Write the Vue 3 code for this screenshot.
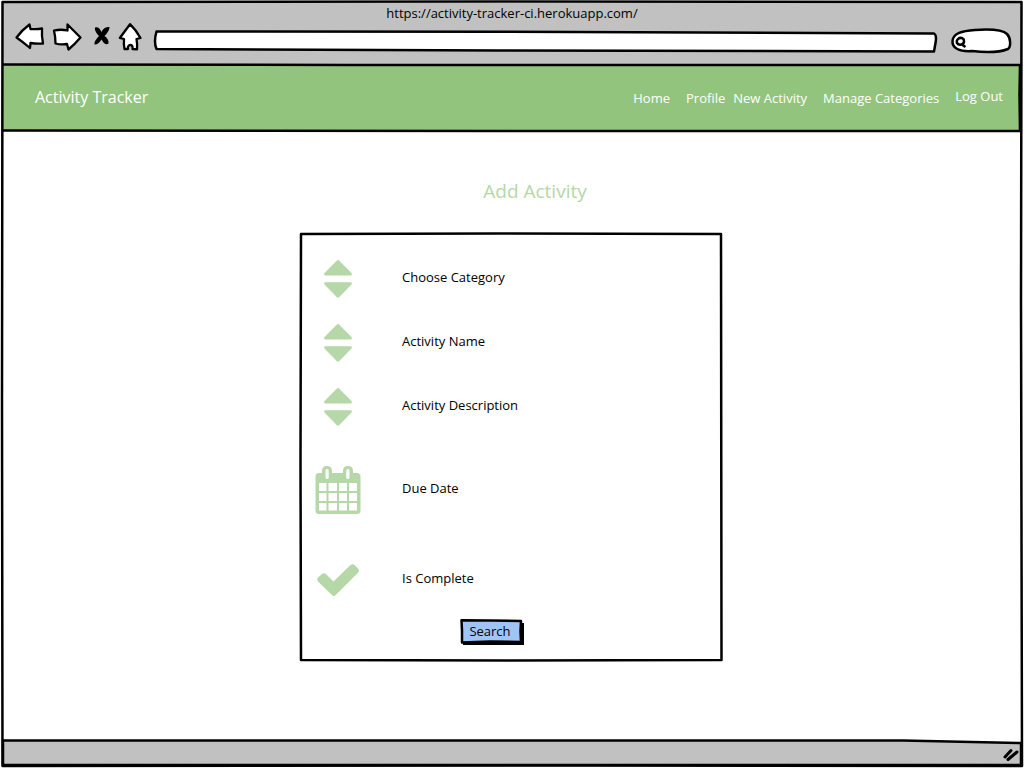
<script setup>
import { ref } from 'vue'

const address = ref('')
const query = ref('')

const links = [
  { id: 'home', label: 'Home' },
  { id: 'profile', label: 'Profile' },
  { id: 'new', label: 'New Activity' },
  { id: 'manage', label: 'Manage Categories' },
  { id: 'logout', label: 'Log Out' }
]

const fields = [
  { id: 'category', label: 'Choose Category', icon: 'sort' },
  { id: 'name', label: 'Activity Name', icon: 'sort' },
  { id: 'description', label: 'Activity Description', icon: 'sort' },
  { id: 'due', label: 'Due Date', icon: 'calendar' },
  { id: 'complete', label: 'Is Complete', icon: 'check' }
]
</script>

<template>
  <div class="window">
    <svg class="ink outline" viewBox="0 0 1024 768" preserveAspectRatio="none" aria-hidden="true">
      <path d="M2.5 2L500 1.5L1021.5 2L1021 300L1022 766L600 765.5L2.5 766L2 400Z" />
    </svg>

    <header class="toolbar">
      <p class="url">https://activity-tracker-ci.herokuapp.com/</p>
      <div class="controls">
        <button type="button" aria-label="Back" class="tool wide">
          <svg viewBox="15 22 28 36"><path d="M16.5 37.5Q22 30 29.5 24.5L30.5 29Q37 29.5 42 28.5Q41.5 36 43 43.5Q36 44 30.5 43L30 48Q23 42 16.5 37.5Z" /></svg>
        </button>
        <button type="button" aria-label="Forward" class="tool wide">
          <svg viewBox="53 22 28 36"><path d="M54 30.5Q61 29 67.5 30.5L67.5 24.5Q74 31 80.5 37.5Q75 44 68.5 49.5L67 44Q61 45 55.5 43.5Q55.5 37 54 30.5Z" /></svg>
        </button>
        <button type="button" aria-label="Stop" class="tool narrow">
          <svg viewBox="91 22 18 36"><path class="solid" d="M95 27.5Q99 26 101.500 32Q104 26.500 109.500 27Q109.500 31 104.500 36Q109 39 108.500 43.500Q105 46 101.500 39.500Q98 45 94.500 44.500Q94 41 99 36Q94 31 95 27.500Z" /></svg>
        </button>
        <button type="button" aria-label="Home page" class="tool medium">
          <svg viewBox="119 22 24 36"><path d="M130 24.200Q125 31 119.800 38L124 39Q123.500 44 124.500 49L128 49Q127.500 45 130.500 45Q133 45 132.500 49L137 49.300Q137.500 44 136.500 39L140.500 38Q136 30 130 24.200Z" /></svg>
        </button>
        <div class="address">
          <svg class="ink" viewBox="153 22 788 36" preserveAspectRatio="none" aria-hidden="true"><path d="M156.500 31.500L500 31.800L934 33.500Q937 35 935.500 43L934 51.500L500 50.500L156.500 49Q153.500 42 156.500 31.500Z" /></svg>
          <input v-model="address" type="text" aria-label="Address">
        </div>
        <div class="lookup">
          <svg class="ink" viewBox="951 22 62 36" preserveAspectRatio="none" aria-hidden="true"><path d="M952.500 41C953 33 962 31 975 30C990 29 1003 30 1007 34C1011 38 1011 47 1008 49C998 53 984 52.500 972 51C959 52 952 48 952.500 41Z" /><path class="glass" d="M963 38.500C959 36.500 956 40 957 43C959 46 964 44.500 964 41.500C964 40 963.500 39 963 38.500M962 44Q963 45.500 965.500 47" /></svg>
          <input v-model="query" type="search" aria-label="Web search">
        </div>
      </div>
    </header>

    <nav class="navbar" aria-label="Main">
      <svg class="ink rules" viewBox="0 0 1018 66" preserveAspectRatio="none" aria-hidden="true"><path d="M0 -0.5L350 0L1017 0L1016.500 30L1017 66L600 66L0 65.500" /></svg>
      <a class="brand" href="#home">Activity Tracker</a>
      <ul>
        <li v-for="link in links" :key="link.id" :class="link.id">
          <a :href="'#' + link.id">{{ link.label }}</a>
        </li>
      </ul>
    </nav>

    <main>
      <h1>Add Activity</h1>
      <form class="card" @submit.prevent>
        <svg class="ink" viewBox="0 0 422 428" preserveAspectRatio="none" aria-hidden="true"><path d="M1 1L200 0.500L421 1L421.500 427L210 427.500L1 427L0.500 230Z" /></svg>
        <div v-for="field in fields" :key="field.id" class="field" :class="field.icon">
          <button type="button" :aria-labelledby="field.id">
            <svg v-if="field.icon === 'sort'" width="28" height="38" viewBox="0 0 28 38">
              <path d="M12.700 0.700Q14 -0.500 15.300 0.700L27.500 13Q28.500 15.500 26.500 15.500H1.500Q-0.500 15.500 0.500 13Z" />
              <path d="M1.500 22.200H26.500Q28.500 22.200 27.500 24.500L15.300 37Q14 38.300 12.700 37L0.500 24.500Q-0.500 22.200 1.500 22.200Z" />
            </svg>
            <svg v-else-if="field.icon === 'calendar'" width="46" height="48" viewBox="0 0 46 48">
              <path fill-rule="evenodd" d="M4 7H7V5Q7 0 12 0Q17 0 17 5V7H28V5Q28 0 33 0Q38 0 38 5V7H42Q45.500 7 45.500 10.500V44.500Q45.500 48 42 48H4Q0.500 48 0.500 44.500V10.500Q0.500 7 4 7ZM10.500 4.500V11.500Q10.500 13 12 13Q13.700 13 13.700 11.500V4.500Q13.700 3 12 3Q10.500 3 10.500 4.500ZM31.200 4.500V11.500Q31.200 13 33 13Q34.500 13 34.500 11.500V4.500Q34.500 3 33 3Q31.200 3 31.200 4.500ZM4 17V25H11.500V17ZM13.500 17V25H22V17ZM24 17V25H32V17ZM34 17V25H42V17ZM4 27V35H11.500V27ZM13.500 27V35H22V27ZM24 27V35H32V27ZM34 27V35H42V27ZM4 37V44.500H11.500V37ZM13.500 37V44.500H22V37ZM24 37V44.500H32V37ZM34 37V44.500H42V37Z" />
            </svg>
            <svg v-else width="42" height="32" viewBox="0 0 42 32">
              <path d="M15.500 31.500L1 17.500Q-0.500 15.500 1 13.500L5 10Q7 8.500 9 10L16.500 17.500L33.500 1Q35.500 -0.700 37.500 1L41 4.500Q43 6.500 41 8.800L18.500 31.200Q17 32.700 15.500 31.500Z" />
            </svg>
          </button>
          <span :id="field.id">{{ field.label }}</span>
        </div>
        <button type="submit" class="submit">
          <svg class="ink" viewBox="0 0 64 26" preserveAspectRatio="none" aria-hidden="true">
            <path class="shade" d="M3 4H64V26H3Z" />
            <path class="face" d="M1.500 1.200L30 1.500L61 2L60.500 12L61 23L30 22.500L2 23.500L2 12Z" />
          </svg>
          <span>Search</span>
        </button>
      </form>
    </main>

    <footer>
      <svg class="ink" viewBox="0 0 1018 25" preserveAspectRatio="none" aria-hidden="true"><path class="bar" d="M0 0.500L450 0.500L900 0.500L1018 3V25H0Z" /></svg>
      <svg class="grip" width="18" height="16" viewBox="0 0 18 16" aria-hidden="true"><path d="M2 10L8 3.500M5 12.500L14 5" /></svg>
    </footer>
  </div>
</template>

<style>
body {
  margin: 0;
  background: #fff;
}
</style>

<style scoped>
* {
  box-sizing: border-box;
}

.window {
  position: relative;
  display: flex;
  flex-direction: column;
  min-height: 100vh;
  padding: 3px;
  color: #000;
  font-family: "Open Sans", "Noto Sans", sans-serif;
  font-size: 13px;
  font-weight: 500;
  line-height: 20px;
}

.ink {
  position: absolute;
  inset: 0;
  width: 100%;
  height: 100%;
  overflow: visible;
  pointer-events: none;
}

.ink path {
  fill: #fff;
  stroke: #000;
  stroke-width: 2.5;
  stroke-linejoin: round;
  vector-effect: non-scaling-stroke;
}

.outline {
  z-index: 2;
}

.outline path,
.rules path,
.ink .glass {
  fill: none;
}

button {
  padding: 0;
  border: 0;
  background: none;
  color: inherit;
  font: inherit;
  cursor: pointer;
}

input {
  position: relative;
  width: 100%;
  height: 100%;
  padding: 0 12px;
  border: 0;
  outline: 0;
  background: transparent;
  font: inherit;
}

a {
  color: inherit;
  text-decoration: none;
}

.toolbar {
  height: 62px;
  background: #c1c1c1;
}

.url {
  height: 19px;
  margin: 0;
  text-align: center;
}

.controls {
  display: flex;
  gap: 10px;
  height: 36px;
  padding: 0 8px 0 12px;
}

.tool svg {
  display: block;
  width: 100%;
  height: 36px;
  overflow: visible;
  fill: #fff;
  stroke: #000;
  stroke-width: 2.3;
  stroke-linejoin: round;
}

.tool .solid {
  fill: #000;
  stroke: none;
}

.wide {
  width: 28px;
}

.narrow {
  width: 18px;
}

.medium {
  width: 24px;
}

.address {
  position: relative;
  flex: 1;
}

.lookup {
  position: relative;
  width: 62px;
}

.lookup input {
  padding-left: 16px;
}

.navbar {
  position: relative;
  display: flex;
  align-items: center;
  justify-content: space-between;
  height: 66px;
  padding: 0 18px 2px 32px;
  background: #93c47d;
  color: #fff;
}

.brand {
  font-size: 16px;
}

.navbar ul {
  display: flex;
  align-items: flex-end;
  gap: 16px;
  margin: 0;
  padding: 0;
  list-style: none;
}

.profile {
  margin-right: -8px;
}

.logout {
  padding-bottom: 2px;
}

main {
  flex: 1;
  display: flex;
  flex-direction: column;
  align-items: center;
  padding: 46px 22px 24px 20px;
}

h1 {
  margin: 0 0 28px;
  padding-left: 48px;
  color: #b6d7a8;
  font-size: 19px;
  font-weight: 500;
  line-height: 28px;
}

.card {
  position: relative;
  width: 100%;
  max-width: 422px;
  padding: 14px 0 16px;
}

.field {
  position: relative;
  display: grid;
  grid-template-columns: 76px 1fr;
  align-items: center;
  gap: 26px;
  height: 64px;
}

.field.calendar {
  height: 102px;
}

.field.check {
  height: 78px;
}

.field svg {
  display: block;
  margin: 0 auto;
  fill: #b6d7a8;
}

.field span {
  padding-bottom: 4px;
}

.submit {
  position: relative;
  display: block;
  width: 64px;
  height: 26px;
  margin-left: 160px;
}

.submit span {
  position: relative;
  display: block;
  padding: 0 4px 2px 0;
}

.submit .shade {
  fill: #000;
  stroke: none;
}

.submit .face {
  fill: #9fc5f8;
}

footer {
  position: relative;
  display: flex;
  align-items: center;
  justify-content: flex-end;
  height: 25px;
}

.ink .bar {
  fill: #c1c1c1;
}

.grip {
  position: relative;
  margin-top: 4px;
  fill: none;
  stroke: #000;
  stroke-width: 3;
  stroke-linecap: round;
}
</style>
